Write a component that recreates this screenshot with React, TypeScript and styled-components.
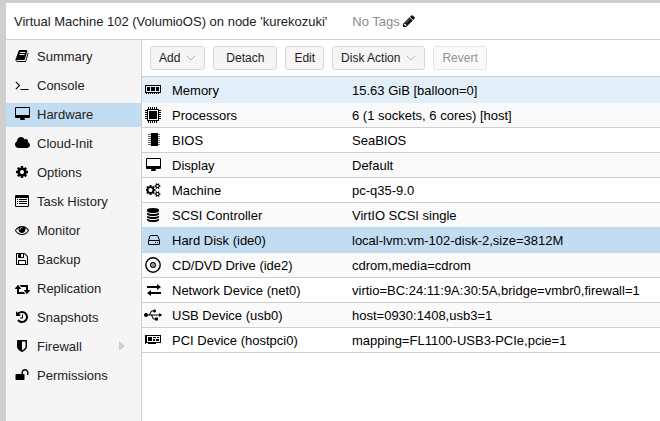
import React from 'react';
import styled, { createGlobalStyle } from 'styled-components';
import { FaUsb } from 'react-icons/fa';

const LINE = '#cfcfcf';
const SELECTED = '#c2ddf2';
const HOVERED = '#e2eff8';

const GlobalStyle = createGlobalStyle`
  *, *::before, *::after { box-sizing: border-box; }
  html, body, #root { height: 100%; margin: 0; }
  body {
    background: #fff;
    color: #000;
    font: 13px/17px "Liberation Sans", Arial, sans-serif;
  }
`;

const Window = styled.div`
  display: flex;
  flex-direction: column;
  min-height: 100vh;
  border: 0 solid ${LINE};
  border-top-width: 3px;
  border-left-width: 6px;
`;

const Header = styled.header`
  display: flex;
  align-items: center;
  gap: 25px;
  height: 37px;
  padding: 0 8px;
  border-bottom: 1px solid ${LINE};
`;

const Title = styled.h1`
  margin: 0;
  font-size: 13px;
  font-weight: normal;
  color: #222;
`;

const Tags = styled.div`
  display: flex;
  align-items: center;
  gap: 2px;
  color: #8c8c8c;
`;

const IconButton = styled.button`
  display: flex;
  padding: 0;
  border: 0;
  background: none;
  color: #111;
`;

const Body = styled.div`
  display: flex;
  flex: 1;
`;

const Nav = styled.nav`
  flex: none;
  width: 136px;
  background: #f5f5f5;
  border-right: 1px solid ${LINE};
`;

const NavList = styled.ul`
  display: flex;
  flex-direction: column;
  gap: 5px;
  margin: 0;
  padding: 5px 0;
  list-style: none;
`;

const NavLink = styled.a<{ $active?: boolean }>`
  display: flex;
  align-items: center;
  height: 24px;
  padding: 0 16px 2px 8px;
  gap: 7px;
  color: #222;
  text-decoration: none;
  background: ${(p) => (p.$active ? SELECTED : 'transparent')};
`;

const IconBox = styled.span`
  display: flex;
  flex: none;
  align-items: center;
  justify-content: center;
  width: 16px;
  height: 16px;
  color: #000;

  & > svg { flex: none; }
`;

const NavArrow = styled.svg`
  margin-left: auto;
  fill: #cfcfcf;
`;

const Main = styled.main`
  flex: 1;
  min-width: 0;
`;

const Toolbar = styled.div`
  display: flex;
  align-items: center;
  gap: 8px;
  height: 37px;
  padding: 0 8px;
  border-bottom: 1px solid ${LINE};
`;

const Button = styled.button<{ $wide?: boolean }>`
  display: flex;
  align-items: center;
  gap: 6px;
  height: 24px;
  padding: 0 ${(p) => (p.$wide ? 12 : 8)}px;
  border: 1px solid #d8d8d8;
  border-radius: 3px;
  background: #f5f5f5;
  color: #222;
  font: inherit;
  font-size: 12px;
  &:disabled {
    background: #fafafa;
    border-color: #e6e6e6;
    color: #929292;
  }
`;

const Table = styled.table`
  width: 100%;
  table-layout: fixed;
  border-collapse: separate;
  border-spacing: 0;
  border-bottom: 1px solid ${LINE};
`;

const Row = styled.tr<{ $fill: string; $line: string }>`
  background: ${(p) => p.$fill};
  & > * { border-top: 1px solid ${(p) => p.$line}; }
`;

const NameCell = styled.th`
  width: 202px;
  height: 25px;
  padding: 0 0 0 3px;
  font-weight: normal;
  text-align: left;
`;

const Name = styled.span`
  display: flex;
  align-items: center;
  gap: 11px;
`;

const ValueCell = styled.td`
  padding: 0 8px;
  white-space: nowrap;
`;

type GlyphName = keyof typeof glyphs;

const glyphs = {
  book: [1792, 'M1703 478q40 57 18 129l-275 906q-19 64-76.5 107.5t-122.5 43.5h-923q-77 0-148.5-53.5t-99.5-131.5q-24-67-2-127 0-4 3-27t4-37q1-8-3-21.5t-3-19.5q2-11 8-21t16.5-23.5 16.5-23.5q23-38 45-91.5t30-91.5q3-10 .5-30t-.5-28q3-11 17-28t17-23q21-36 42-92t25-90q1-9-2.5-32t.5-28q4-13 22-30.5t22-22.5q19-26 42.5-84.5t27.5-96.5q1-8-3-25.5t-2-26.5q2-8 9-18t18-23 17-21q8-12 16.5-30.5t15-35 16-36 19.5-32 26.5-23.5 36-11.5 47.5 5.5l-1 3q38-9 51-9h761q74 0 114 56t18 130l-274 906q-36 119-71.5 153.5t-128.5 34.5h-869q-27 0-38 15-11 16-1 43 24 70 144 70h923q29 0 56-15.5t35-41.5l300-987q7-22 5-57 38 15 59 43zm-1064 2q-4 13 2 22.5t20 9.5h608q13 0 25.5-9.5t16.5-22.5l21-64q4-13-2-22.5t-20-9.5h-608q-13 0-25.5 9.5t-16.5 22.5zm-83 256q-4 13 2 22.5t20 9.5h608q13 0 25.5-9.5t16.5-22.5l21-64q4-13-2-22.5t-20-9.5h-608q-13 0-25.5 9.5t-16.5 22.5z'],
  terminal: [1792, 'M649 983l-466 466q-10 10-23 10t-23-10l-50-50q-10-10-10-23t10-23l393-393-393-393q-10-10-10-23t10-23l50-50q13-10 23-10t23 10l466 466q10 10 10 23t-10 23zm1079 457v64q0 14-9 23t-23 9h-960q-14 0-23-9t-9-23v-64q0-14 9-23t23-9h960q14 0 23 9t9 23z'],
  desktop: [1920, 'M1792 992v-832q0-13-9.5-22.5t-22.5-9.5h-1600q-13 0-22.5 9.5t-9.5 22.5v832q0 13 9.5 22.5t22.5 9.5h1600q13 0 22.5-9.5t9.5-22.5zm128-832v1088q0 66-47 113t-113 47h-544q0 37 16 77.5t32 71 16 43.5q0 26-19 45t-45 19h-512q-26 0-45-19t-19-45q0-14 16-44t32-70 16-78h-544q-66 0-113-47t-47-113v-1088q0-66 47-113t113-47h1600q66 0 113 47t47 113z'],
  cloud: [1856, 'M1856 1152q0 159-112.5 271.5t-271.5 112.5h-1088q-185 0-316.5-131.5t-131.5-316.5q0-132 71-241.5t187-163.5q-2-28-2-43 0-212 150-362t362-150q158 0 286.5 88t187.5 230q70-62 166-62 106 0 181 75t75 181q0 75-41 138 129 30 213 134.5t84 239.5z'],
  cog: [1792, 'M1152 896q0-106-75-181t-181-75-181 75-75 181 75 181 181 75 181-75 75-181zm512-109v222q0 12-8 23t-20 13l-185 28q-19 54-39 91 35 50 107 138 10 12 10 25t-9 23q-27 37-99 108t-94 71q-12 0-26-9l-138-108q-44 23-91 38-16 136-29 186-7 28-36 28h-222q-14 0-24.5-8.5t-11.5-21.5l-28-184q-49-16-90-37l-141 107q-10 9-25 9-14 0-25-11-126-114-165-168-7-10-7-23 0-12 8-23 15-21 51-66.5t54-70.5q-27-50-41-99l-183-27q-13-2-21-12.5t-8-23.5v-222q0-12 8-23t19-13l186-28q14-46 39-92-40-57-107-138-10-12-10-24 0-10 9-23 26-36 98.5-107.5t94.5-71.5q13 0 26 10l138 107q44-23 91-38 16-136 29-186 7-28 36-28h222q14 0 24.5 8.5t11.5 21.5l28 184q49 16 90 37l142-107q9-9 24-9 13 0 25 10 129 119 165 170 7 8 7 22 0 12-8 23-15 21-51 66.5t-54 70.5q26 50 41 98l183 28q13 2 21 12.5t8 23.5z'],
  list: [1792, 'M160 128h1472q160 0 160 160v1216q0 160-160 160h-1472q-160 0-160-160v-1216q0-160 160-160zM128 544v928q0 64 64 64h1408q64 0 64-64v-928q0-32-32-32h-1472q-32 0-32 32zM256 640h128v128h-128zM512 640h1024v128h-1024zM256 896h128v128h-128zM512 896h1024v128h-1024zM256 1152h128v128h-128zM512 1152h1024v128h-1024z'],
  eye: [1792, 'M1664 960q-152-236-381-353 61 104 61 225 0 185-131.5 316.5t-316.5 131.5-316.5-131.5-131.5-316.5q0-121 61-225-229 117-381 353 133 205 333.5 326.5t434.5 121.5 434.5-121.5 333.5-326.5zm-720-384q0-20-14-34t-34-14q-125 0-214.5 89.5t-89.5 214.5q0 20 14 34t34 14 34-14 14-34q0-86 61-147t147-61q20 0 34-14t14-34zm848 384q0 34-20 69-140 230-376.5 368.5t-499.5 138.5-499.5-139-376.5-368q-20-35-20-69t20-69q140-229 376.5-368t499.5-139 499.5 139 376.5 368q20 35 20 69z'],
  floppy: [1792, 'M512 1536h768v-384h-768v384zm896 0h128v-896q0-14-10-38.5t-20-34.5l-281-281q-10-10-34-20t-39-10v416q0 40-28 68t-68 28h-576q-40 0-68-28t-28-68v-416h-128v1280h128v-416q0-40 28-68t68-28h832q40 0 68 28t28 68v416zm-384-928v-320q0-13-9.5-22.5t-22.5-9.5h-192q-13 0-22.5 9.5t-9.5 22.5v320q0 13 9.5 22.5t22.5 9.5h192q13 0 22.5-9.5t9.5-22.5zm640 32v928q0 40-28 68t-68 28h-1344q-40 0-68-28t-28-68v-1344q0-40 28-68t68-28h928q40 0 88 20t76 48l280 280q28 28 48 76t20 88z'],
  retweet: [1920, 'M1280 1632q0 13-9.5 22.5t-22.5 9.5h-960q-8 0-13.5-2t-9-7-5.5-8-3-11.5-1-11.5v-600h-192q-26 0-45-19t-19-45q0-24 15-41l320-384q19-22 49-22t49 22l320 384q15 17 15 41 0 26-19 45t-45 19h-192v384h576q16 0 25 11l160 192q7 10 7 21zm640-416q0 24-15 41l-320 384q-20 23-49 23t-49-23l-320-384q-15-17-15-41 0-26 19-45t45-19h192v-384h-576q-16 0-25-12l-160-192q-7-9-7-20 0-13 9.5-22.5t22.5-9.5h960q8 0 13.5 2t9 7 5.5 8 3 11.5 1 11.5v600h192q26 0 45 19t19 45z'],
  history: [1792, 'M1664 896q0 156-61 298t-164 245-245 164-298 61q-172 0-327-72.5t-264-204.5q-7-10-6.5-22.5t8.5-20.5l137-138q10-9 25-9 16 2 23 12 73 95 179 147t225 52q104 0 198.5-40.5t163.5-109.5 109.5-163.5 40.5-198.5-40.5-198.5-109.5-163.5-163.5-109.5-198.5-40.5q-98 0-188 35.5t-160 101.5l137 138q31 30 14 69-17 40-59 40h-448q-26 0-45-19t-19-45v-448q0-42 40-59 39-17 69 14l130 129q107-101 244.5-156.5t284.5-55.5q156 0 298 61t245 164 164 245 61 298zm-640-288v448q0 14-9 23t-23 9h-320q-14 0-23-9t-9-23v-64q0-14 9-23t23-9h224v-352q0-14 9-23t23-9h64q14 0 23 9t9 23z'],
  shield: [1792, 'M1344 960v-640h-448v1137q119-63 213-137 235-184 235-360zm192-768v768q0 86-33.5 170.5t-83 150-118 127.5-126.5 103-121 77.5-89.5 49.5-42.5 20q-12 6-26 6t-26-6q-16-7-42.5-20t-89.5-49.5-121-77.5-126.5-103-118-127.5-83-150-33.5-170.5v-768q0-26 19-45t45-19h1152q26 0 45 19t19 45z'],
  unlock: [1792, 'M1728 576v256q0 26-19 45t-45 19h-64q-26 0-45-19t-19-45v-256q0-106-75-181t-181-75-181 75-75 181v192h96q40 0 68 28t28 68v576q0 40-28 68t-68 28h-960q-40 0-68-28t-28-68v-576q0-40 28-68t68-28h672v-192q0-185 131.5-316.5t316.5-131.5 316.5 131.5 131.5 316.5z'],
  pencil: [1792, 'M491 1536l91-91-235-235-91 91v107h128v128h107zm523-928q0-22-22-22-10 0-17 7l-542 542q-7 7-7 17 0 22 22 22 10 0 17-7l542-542q7-7 7-17zm-54-192l416 416-832 832h-416v-416zm683 96q0 53-37 90l-166 166-416-416 166-165q36-38 90-38 53 0 91 38l235 234q37 39 37 91z'],
  cogs: [1920, 'M832 896q0-106-75-181t-181-75-181 75-75 181 75 181 181 75 181-75 75-181zm768 512q0-52-38-90t-90-38-90 38-38 90q0 53 37.5 90.5t90.5 37.5 90.5-37.5 37.5-90.5zm0-1024q0-52-38-90t-90-38-90 38-38 90q0 53 37.5 90.5t90.5 37.5 90.5-37.5 37.5-90.5zm-384 421v185q0 10-7 19.5t-16 10.5l-155 24q-11 35-32 76 34 48 90 115 7 11 7 20 0 12-7 19-23 30-82.5 89.5t-78.5 59.5q-11 0-21-7l-115-90q-37 19-77 31-11 108-23 155-7 24-30 24h-186q-11 0-20-7.5t-10-17.5l-23-153q-34-10-75-31l-118 89q-7 7-20 7-11 0-21-8-144-133-144-160 0-9 7-19 10-14 41-53t47-61q-23-44-35-82l-152-24q-10-1-17-9.5t-7-19.5v-185q0-10 7-19.5t16-10.5l155-24q11-35 32-76-34-48-90-115-7-11-7-20 0-12 7-20 22-30 82-89t79-59q11 0 21 7l115 90q34-18 77-32 11-108 23-154 7-24 30-24h186q11 0 20 7.5t10 17.5l23 153q34 10 75 31l118-89q8-7 20-7 11 0 21 8 144 133 144 160 0 8-7 19-12 16-42 54t-45 60q23 48 34 82l152 23q10 2 17 10.5t7 19.5zm640 533v140q0 16-149 31-12 27-30 52 51 113 51 138 0 4-4 7-122 71-124 71-8 0-46-47t-52-68q-20 2-30 2t-30-2q-14 21-52 68t-46 47q-2 0-124-71-4-3-4-7 0-25 51-138-18-25-30-52-149-15-149-31v-140q0-16 149-31 13-29 30-52-51-113-51-138 0-4 4-7 4-2 35-20t59-34 30-16q8 0 46 46.5t52 67.5q20-2 30-2t30 2q51-71 92-112l6-2q4 0 124 70 4 3 4 7 0 25-51 138 17 23 30 52 149 15 149 31zm0-1024v140q0 16-149 31-12 27-30 52 51 113 51 138 0 4-4 7-122 71-124 71-8 0-46-47t-52-68q-20 2-30 2t-30-2q-14 21-52 68t-46 47q-2 0-124-71-4-3-4-7 0-25 51-138-18-25-30-52-149-15-149-31v-140q0-16 149-31 13-29 30-52-51-113-51-138 0-4 4-7 4-2 35-20t59-34 30-16q8 0 46 46.5t52 67.5q20-2 30-2t30 2q51-71 92-112l6-2q4 0 124 70 4 3 4 7 0 25-51 138 17 23 30 52 149 15 149 31z'],
  database: [1792, 'M896 768q237 0 443-43t325-127v170q0 69-103 128t-280 93.5-385 34.5-385-34.5-280-93.5-103-128v-170q119 84 325 127t443 43zm0 768q237 0 443-43t325-127v170q0 69-103 128t-280 93.5-385 34.5-385-34.5-280-93.5-103-128v-170q119 84 325 127t443 43zm0-384q237 0 443-43t325-127v170q0 69-103 128t-280 93.5-385 34.5-385-34.5-280-93.5-103-128v-170q119 84 325 127t443 43zm0-1152q208 0 385 34.5t280 93.5 103 128v128q0 69-103 128t-280 93.5-385 34.5-385-34.5-280-93.5-103-128v-128q0-69 103-128t280-93.5 385-34.5z'],
} as const;

const Glyph = ({ name, size = 14 }: { name: GlyphName; size?: number }) => {
  const [width, d] = glyphs[name];
  const left = name === 'cloud' ? -64 : 0;
  return (
    <svg
      width={Math.round((size * (width - left)) / 1792)}
      height={size}
      viewBox={`${left} 0 ${width - left} 1792`}
      fill="currentColor"
      fillRule={name === 'list' ? 'evenodd' : 'nonzero'}
      aria-hidden="true"
    >
      <path d={d} />
    </svg>
  );
};

const Art = ({ children }: { children: React.ReactNode }) => (
  <svg width="16" height="16" viewBox="0 0 16 16" fill="currentColor" aria-hidden="true">
    {children}
  </svg>
);

const MemoryIcon = () => (
  <Art>
    <path fillRule="evenodd" d="M0 3h16v8h-16zM1 4v6h14v-6z" />
    <path d="M2 5h3v4h-3zM6 5h4v4h-4zM11 5h3v4h-3zM1 11h1v1h-1zM3 11h1v1h-1zM5 11h1v1h-1zM7 11h1v1h-1zM9 11h1v1h-1zM11 11h1v1h-1zM13 11h1v1h-1z" />
  </Art>
);

const CpuIcon = () => (
  <Art>
    <path fillRule="evenodd" d="M2 2h12v12h-12zM3 3v10h10v-10z" />
    <path d="M4 4h8v8h-8z" />
    <path
      fill="none"
      stroke="currentColor"
      d="M3.5 0v2M5.5 0v2M7.5 0v2M9.5 0v2M11.5 0v2M3.5 14v2M5.5 14v2M7.5 14v2M9.5 14v2M11.5 14v2M0 3.5h2M0 5.5h2M0 7.5h2M0 9.5h2M0 11.5h2M14 3.5h2M14 5.5h2M14 7.5h2M14 9.5h2M14 11.5h2"
    />
  </Art>
);

const ChipIcon = () => (
  <Art>
    <path d="M6 1h7v13h-7z" />
    <path fill="none" stroke="currentColor" strokeOpacity=".6" d="M3 2.500h12M3 4.500h12M3 6.500h12M3 8.500h12M3 10.500h12M3 12.500h12" />
  </Art>
);

const DriveIcon = () => (
  <Art>
    <path
      fill="none"
      stroke="currentColor"
      strokeLinejoin="round"
      d="M3.5 8.5L5 4Q5.2 3.500 5.700 3.500H12Q12.600 3.500 12.800 4L14.500 8.500V12Q14.500 12.500 14 12.500H4Q3.500 12.500 3.500 12ZM3.500 8.500H14.500"
    />
    <path d="M10 10h1v1h-1zM12 10h1v1h-1z" />
  </Art>
);

const DiscIcon = () => (
  <Art>
    <circle cx="8" cy="8" r="7.2" fill="none" stroke="currentColor" strokeWidth="1.4" />
    <circle cx="8" cy="8" r="2.4" fill="none" stroke="currentColor" strokeWidth="1.2" />
    <circle cx="8" cy="8" r=".8" />
  </Art>
);

const ExchangeIcon = () => (
  <Art>
    <path d="M2 4h10V2L16 5L12 8V6H2zM16 12H6V14L2 11L6 8V10H16z" />
  </Art>
);

const PciIcon = () => (
  <Art>
    <path fillRule="evenodd" d="M0 3h16v8h-15v1h-1zM2 4v6h13v-6z" />
    <path d="M3 5h4v4h-4zM8 5h3v1h-3zM12 5h2v1h-2zM8 7h2v2h-2zM11 7h3v2h-3zM3 11h8v1h-8z" />
  </Art>
);

const Chevron = () => (
  <svg width="10" height="6" viewBox="0 0 10 6" fill="none" stroke="#b4b4b4" aria-hidden="true">
    <path d="M1 1L5 5L9 1" />
  </svg>
);

const navItems: { label: string; icon: GlyphName; active?: boolean; more?: boolean }[] = [
  { label: 'Summary', icon: 'book' },
  { label: 'Console', icon: 'terminal' },
  { label: 'Hardware', icon: 'desktop', active: true },
  { label: 'Cloud-Init', icon: 'cloud' },
  { label: 'Options', icon: 'cog' },
  { label: 'Task History', icon: 'list' },
  { label: 'Monitor', icon: 'eye' },
  { label: 'Backup', icon: 'floppy' },
  { label: 'Replication', icon: 'retweet' },
  { label: 'Snapshots', icon: 'history' },
  { label: 'Firewall', icon: 'shield', more: true },
  { label: 'Permissions', icon: 'unlock' },
];

const devices: { name: string; value: string; icon: React.ReactNode; tint?: string }[] = [
  { name: 'Memory', value: '15.63 GiB [balloon=0]', icon: <MemoryIcon />, tint: HOVERED },
  { name: 'Processors', value: '6 (1 sockets, 6 cores) [host]', icon: <CpuIcon /> },
  { name: 'BIOS', value: 'SeaBIOS', icon: <ChipIcon /> },
  { name: 'Display', value: 'Default', icon: <Glyph name="desktop" /> },
  { name: 'Machine', value: 'pc-q35-9.0', icon: <Glyph name="cogs" /> },
  { name: 'SCSI Controller', value: 'VirtIO SCSI single', icon: <Glyph name="database" /> },
  { name: 'Hard Disk (ide0)', value: 'local-lvm:vm-102-disk-2,size=3812M', icon: <DriveIcon />, tint: SELECTED },
  { name: 'CD/DVD Drive (ide2)', value: 'cdrom,media=cdrom', icon: <DiscIcon /> },
  { name: 'Network Device (net0)', value: 'virtio=BC:24:11:9A:30:5A,bridge=vmbr0,firewall=1', icon: <ExchangeIcon /> },
  { name: 'USB Device (usb0)', value: 'host=0930:1408,usb3=1', icon: <FaUsb size={18} /> },
  { name: 'PCI Device (hostpci0)', value: 'mapping=FL1100-USB3-PCIe,pcie=1', icon: <PciIcon /> },
];

export default function App() {
  return (
    <>
      <GlobalStyle />
      <Window>
        <Header>
          <Title>Virtual Machine 102 (VolumioOS) on node 'kurekozuki'</Title>
          <Tags>
            No Tags
            <IconButton type="button" aria-label="Edit tags">
              <Glyph name="pencil" />
            </IconButton>
          </Tags>
        </Header>
        <Body>
          <Nav>
            <NavList>
              {navItems.map((item) => (
                <li key={item.label}>
                  <NavLink href="#" $active={item.active} aria-current={item.active ? 'page' : undefined}>
                    <IconBox>
                      <Glyph name={item.icon} />
                    </IconBox>
                    {item.label}
                    {item.more && (
                      <NavArrow width="6" height="10" viewBox="0 0 6 10" aria-hidden="true">
                        <path d="M0 0L6 5L0 10z" />
                      </NavArrow>
                    )}
                  </NavLink>
                </li>
              ))}
            </NavList>
          </Nav>
          <Main>
            <Toolbar>
              <Button type="button">Add <Chevron /></Button>
              <Button type="button" $wide>Detach</Button>
              <Button type="button">Edit</Button>
              <Button type="button">Disk Action <Chevron /></Button>
              <Button type="button" disabled>Revert</Button>
            </Toolbar>
            <Table>
              <tbody>
                {devices.map((device, i) => (
                  <Row
                    key={device.name}
                    $fill={device.tint ?? (i % 2 ? '#fafafa' : '#fff')}
                    $line={device.tint ?? devices[i - 1]?.tint ?? LINE}
                  >
                    <NameCell scope="row">
                      <Name>
                        <IconBox>{device.icon}</IconBox>
                        {device.name}
                      </Name>
                    </NameCell>
                    <ValueCell>{device.value}</ValueCell>
                  </Row>
                ))}
              </tbody>
            </Table>
          </Main>
        </Body>
      </Window>
    </>
  );
}
